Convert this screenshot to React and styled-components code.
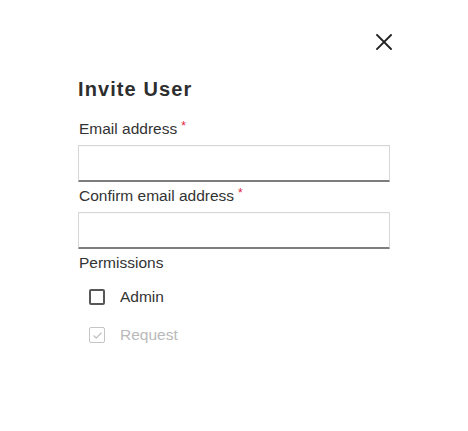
import React from "react";
import styled, { createGlobalStyle } from "styled-components";

const Global = createGlobalStyle`
  html, body { margin: 0; padding: 0; background: #fff; }
  body { font-family: "Liberation Sans", Arial, sans-serif; }
`;

const Dialog = styled.div`
  width: 468px;
  height: 431px;
  box-sizing: border-box;
  padding: 33px 77px 0 78px;
  display: flex;
  flex-direction: column;
`;

const TopBar = styled.div`
  display: flex;
  justify-content: flex-end;
  height: 18px;
`;

const CloseButton = styled.button`
  border: 0;
  background: none;
  padding: 0;
  width: 18px;
  height: 18px;
  margin-right: -2px;
  cursor: pointer;
  display: flex;
  align-items: center;
  justify-content: center;
`;

const Title = styled.h2`
  margin: 26px 0 0 0;
  font-size: 20px;
  line-height: 24px;
  font-weight: 700;
  letter-spacing: 1.1px;
  color: #2e2e2e;
`;

const Field = styled.div`
  display: flex;
  flex-direction: column;
  margin-top: ${(p) => p.$top}px;
`;

const Label = styled.label`
  display: block;
  height: 18px;
  font-size: 15.5px;
  line-height: 18px;
  color: #333;
  padding-left: 1px;
  margin-bottom: 7px;
`;

const Req = styled.span`
  position: relative;
  top: -4px;
  color: #e0243c;
  font-size: 12px;
  line-height: 0;
  margin-left: 4px;
`;

const Input = styled.input`
  box-sizing: border-box;
  width: 312px;
  height: 37px;
  border: 1px solid #d6d6d6;
  border-bottom: 2px solid #7d7d7d;
  border-radius: 1px;
  background: #fff;
  box-shadow: inset 0 1px 1px rgba(0,0,0,0.03);
  outline: none;
  padding: 0 10px;
  font-size: 15px;
  font-family: inherit;
`;

const Section = styled.div`
  font-size: 15.5px;
  line-height: 18px;
  color: #333;
  padding-left: 1px;
  margin-top: 5px;
`;

const Options = styled.div`
  display: flex;
  flex-direction: column;
  gap: 20px;
  margin-top: 16px;
  padding-left: 11px;
`;

const Option = styled.label`
  display: flex;
  align-items: center;
  gap: 15px;
  height: 18px;
  font-size: 15.5px;
  line-height: 18px;
  color: ${(p) => (p.$disabled ? "#b9b9b9" : "#333")};
`;

const Box = styled.span`
  box-sizing: border-box;
  width: 16px;
  height: 16px;
  border: ${(p) => (p.$disabled ? "1.5px solid #c4c4c4" : "2px solid #575757")};
  border-radius: 2px;
  display: flex;
  align-items: center;
  justify-content: center;
`;

export default function App() {
  return (
    <>
      <Global />
      <Dialog>
        <TopBar>
          <CloseButton aria-label="Close">
            <svg width="16" height="16" viewBox="0 0 16 16">
              <path d="M1 1 L15 15 M15 1 L1 15" stroke="#222" strokeWidth="1.9" strokeLinecap="square" fill="none" />
            </svg>
          </CloseButton>
        </TopBar>
        <Title>Invite User</Title>
        <Field $top={19}>
          <Label>
            Email address<Req>*</Req>
          </Label>
          <Input type="email" />
        </Field>
        <Field $top={5}>
          <Label>
            Confirm email address<Req>*</Req>
          </Label>
          <Input type="email" />
        </Field>
        <Section>Permissions</Section>
        <Options>
          <Option>
            <Box />
            Admin
          </Option>
          <Option $disabled>
            <Box $disabled>
              <svg width="11" height="9" viewBox="0 0 11 9">
                <path d="M1.5 4.5 L4.2 7 L9.5 1.8" stroke="#c4c4c4" strokeWidth="1.3" fill="none" />
              </svg>
            </Box>
            Request
          </Option>
        </Options>
      </Dialog>
    </>
  );
}
